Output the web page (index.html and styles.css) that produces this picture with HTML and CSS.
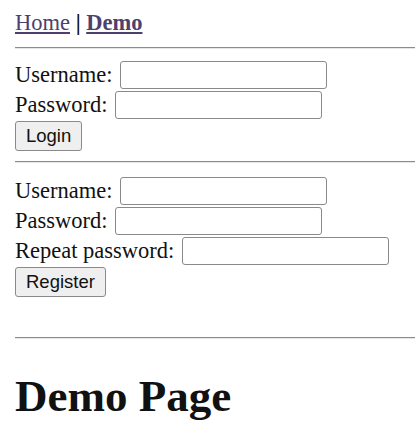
FILE: index.html
```html
<!DOCTYPE html>
<html>
<head>
<meta charset="utf-8">
<link rel="stylesheet" href="styles.css">
</head>
<body>
<nav class="nav"><a class="link" href="#">Home</a> <b class="sep">|</b> <a class="link strong" href="#">Demo</a></nav>
<hr class="rule">
<form class="form">
  <div class="row"><label class="label">Username:</label><input class="field" type="text"></div>
  <div class="row"><label class="label">Password:</label><input class="field" type="password"></div>
  <div class="row"><button class="btn" type="button">Login</button></div>
</form>
<hr class="rule">
<form class="form form-register">
  <div class="row"><label class="label">Username:</label><input class="field" type="text"></div>
  <div class="row"><label class="label">Password:</label><input class="field" type="password"></div>
  <div class="row"><label class="label">Repeat password:</label><input class="field" type="password"></div>
  <div class="row"><button class="btn" type="button">Register</button></div>
</form>
<hr class="rule rule-last">
<h1 class="title">Demo Page</h1>
</body>
</html>
```
FILE: styles.css
```css
html, body {
  margin: 0;
  background: #ffffff;
}
body {
  padding: 0 0 0 15px;
  font-family: "Liberation Serif", "Times New Roman", serif;
  font-size: 22.5px;
  color: #111111;
}
.nav {
  padding-top: 10px;
  height: 26px;
  line-height: 26px;
}
.link {
  color: #4d3f6e;
  text-decoration: underline;
}
.strong {
  font-weight: bold;
}
.sep {
  font-weight: bold;
  color: #111;
}
.rule {
  margin: 11px 0 0 0;
  height: 0;
  border: 0;
  border-top: 1px solid #8c8c8c;
  border-bottom: 1px solid #e6e6e6;
}
.form {
  margin: 0;
  padding-top: 11px;
}
.form-register {
  padding-top: 13px;
  padding-bottom: 41px;
}
.row {
  display: flex;
  align-items: center;
  height: 30px;
}
.label {
  white-space: nowrap;
}
.field {
  box-sizing: border-box;
  width: 207px;
  height: 28px;
  margin: 0 0 0 7.5px;
  padding: 0 4px;
  border: 1px solid #8a8a8a;
  border-radius: 3px;
  background: #fff;
  font-size: 18px;
}
.btn {
  box-sizing: border-box;
  height: 30px;
  margin: 1px 0 0 0;
  padding: 0 10px;
  border: 1px solid #8a8a8a;
  border-radius: 3px;
  background: #efefef;
  font-family: "Liberation Sans", Arial, sans-serif;
  font-size: 18.5px;
  color: #111;
}
.rule-last {
  margin-top: 0;
}
.title {
  margin: 31px 0 0 0;
  font-size: 45px;
  font-weight: bold;
  line-height: 52px;
  color: #111;
}
```
